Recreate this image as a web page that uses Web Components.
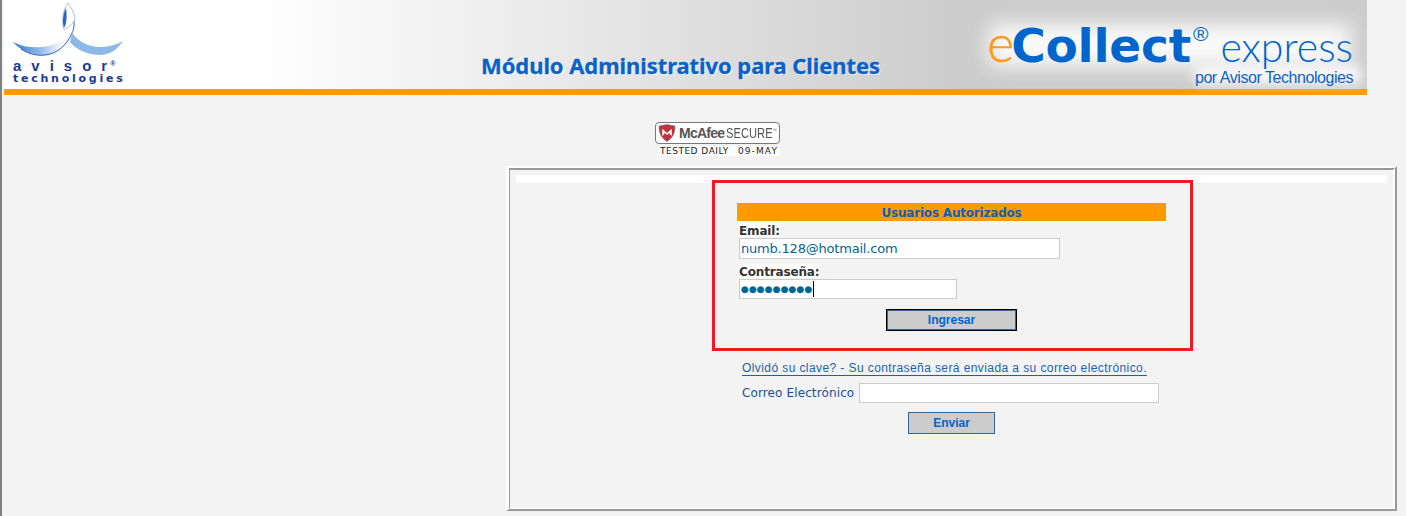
<!DOCTYPE html>
<html>
<head>
<meta charset="utf-8">
<title>eCollect express</title>
<style>
  html, body { margin: 0; height: 100%; overflow: hidden; }
  body { background: #f3f3f3; font-family: "Liberation Sans", Arial, sans-serif; }
  page-frame { height: 516px; }
</style>
</head>
<body>
<page-frame>
  <top-banner></top-banner>
  <secure-badge></secure-badge>
  <login-panel></login-panel>
</page-frame>

<script>
class PageFrame extends HTMLElement {
  constructor() {
    super();
    this.attachShadow({ mode: 'open' }).innerHTML = `
      <style>
        :host { display: block; box-sizing: border-box; border-left: 2px solid #808080; padding-left: 2px; background: #f3f3f3; }
      </style>
      <slot></slot>`;
  }
}

class TopBanner extends HTMLElement {
  constructor() {
    super();
    this.attachShadow({ mode: 'open' }).innerHTML = `
      <style>
        :host { display: block; width: 1363px; height: 95px; box-sizing: border-box; border-bottom: 6px solid #ff9900;
                background: linear-gradient(90deg, #fff 0, #fff 250px, #ccc 960px, #ccc 100%); position: relative; }
        .row { display: flex; align-items: flex-start; height: 89px; }
        .avisor { width: 477px; flex: none; padding: 3px 0 0 9px; box-sizing: border-box; }
        .avisor svg { display: block; }
        .word { font: bold 15px/15px "Liberation Sans", sans-serif; color: #1b3a94; letter-spacing: 10px; margin: -1px 0 0 0; white-space: nowrap; }
        .word span { letter-spacing: 3px; }
        .word sup { font-size: 7px; letter-spacing: 0; vertical-align: 5px; line-height: 0; }
        .tech { font: bold 11px/11px "DejaVu Sans", sans-serif; color: #1b3a94; letter-spacing: 2.75px; white-space: nowrap; }
        h1 { margin: 51px 0 0; font: bold 22px/28px "Noto Sans", sans-serif; color: #0a62c8; white-space: nowrap; width: 400px; flex: none;
             letter-spacing: -.08px; -webkit-text-stroke: .3px #0a62c8; text-shadow: 1px 1px 0 #fff; }
        .brand { position: relative; margin-left: 102px; width: 380px; flex: none; }
        .brand::before { content: ""; position: absolute; left: 6px; top: 24px; width: 362px; height: 42px; background: #fff; opacity: .9; filter: blur(10px); }
        .brand::after { content: ""; position: absolute; left: 212px; top: 66px; width: 166px; height: 18px; background: #fff; opacity: .9; filter: blur(6px); }
        .logo { position: absolute; left: 4px; top: 12px; white-space: nowrap; z-index: 1; line-height: 60px; color: #0066cc; }
        .e { font: 300 52px/60px Lato, sans-serif; color: #ff9a1c; margin-right: -3px; -webkit-text-stroke: .6px #ff9a1c; }
        .c { font: bold 47px/60px "DejaVu Sans", sans-serif; letter-spacing: -.2px; }
        .r { font: 300 21px/20px "Liberation Sans", sans-serif; vertical-align: 21px; margin-left: 2px; }
        .x { font: 300 41px/60px Lato, sans-serif; margin-left: 12px; }
        .por { position: absolute; right: 10px; top: 68px; z-index: 1; font: 16px/20px "Liberation Sans", sans-serif; color: #0a62c8; letter-spacing: -.45px; white-space: nowrap; }
      </style>
      <div class="row">
        <div class="avisor">
          <svg width="112" height="56" viewBox="0 0 112 56">
            <defs>
              <linearGradient id="lg" x1="0" x2="1" y1="0" y2="0">
                <stop offset="0" stop-color="#2f78d0"/><stop offset=".45" stop-color="#8db8e8"/><stop offset=".8" stop-color="#f5f9fd"/>
              </linearGradient>
            </defs>
            <path d="M0 39 C10 44 20 45 29 44 C40 43 50 38 59 30 C56 42 44 52 30 52 C18 52 7 47 0 39 Z" fill="url(#lg)"/>
            <path d="M8 46 C16 51 24 53 32 52 C44 51 54 42 59 30 C61 26 62 20 60 14" fill="none" stroke="#1f4fa8" stroke-width=".9"/>
            <path d="M59 30 C66 39 76 44 87 44 C95 44 103 42 110 38 C104 47 96 52 87 52 C75 52 62 46 57 39 Z" fill="#8db9e6"/>
            <path d="M55 0 C50 7 48 17 51 27 C56 24 61 20 62 15 C61 9 58 4 55 0 Z" fill="#fff" stroke="#8fb6e4" stroke-width=".8"/>
            <path d="M53 5 C50 11 49 18 51 25 C54 20 54 13 53 5 Z" fill="#2a65bf"/>
          </svg>
          <div class="word">aviso<span>r</span><sup>®</sup></div>
          <div class="tech">technologies</div>
        </div>
        <h1>Módulo Administrativo para Clientes</h1>
        <div class="brand">
          <div class="logo"><span class="e">e</span><span class="c">Collect</span><span class="r">®</span><span class="x">express</span></div>
          <div class="por">por Avisor Technologies</div>
        </div>
      </div>`;
  }
}

class SecureBadge extends HTMLElement {
  constructor() {
    super();
    this.attachShadow({ mode: 'open' }).innerHTML = `
      <style>
        :host { display: block; box-sizing: border-box; width: 125px; margin: 27px 0 10px 651px; }
        .top { box-sizing: border-box; height: 22px; background: #fff; border: 1px solid #777; border-radius: 4px; display: flex; align-items: center; padding-left: 2px; gap: 3px; white-space: nowrap; }
        .top svg { flex: none; }
        .top div { min-width: 0; }
        .top b { font: bold 14px/20px "Liberation Sans", sans-serif; color: #555; letter-spacing: -.75px; }
        .top span { display: inline-block; font: 14px/20px "Liberation Sans", sans-serif; color: #555; transform: scaleX(.8); transform-origin: 0 50%; margin: 0 -14px 0 2px; }
        .top sup { font-size: 5px; line-height: 0; vertical-align: 6px; }
        .bottom { margin: 2px 0 0 4px; background: #fff; height: 10px; padding: 0 2px 0 1px; display: flex; justify-content: space-between; font: 9px/10px "DejaVu Sans", sans-serif; color: #222; white-space: nowrap; letter-spacing: .5px; }
        .bottom span + span { letter-spacing: 1.1px; }
      </style>
      <div class="top">
        <svg width="18" height="18" viewBox="0 0 17 17">
          <path d="M1 2 L8.5 0.5 L16 2 C16.5 9 13 14 8.5 16.5 C4 14 .5 9 1 2 Z" fill="#c0323c" stroke="#777" stroke-width=".6"/>
          <path d="M4 11 V4.5 L8.5 8.5 L13 4.5 V11 L11 9.8 V8 L8.5 10.5 L6 8 V9.8 Z" fill="#fff"/>
        </svg>
        <div><b>McAfee</b><span>SECURE<sup>™</sup></span></div>
      </div>
      <div class="bottom"><span>TESTED DAILY</span><span>09-MAY</span></div>`;
  }
}

class TextField extends HTMLElement {
  constructor() {
    super();
    const value = this.getAttribute('value') || '';
    const dots = this.hasAttribute('password');
    const caret = this.hasAttribute('caret') ? '<i></i>' : '';
    this.attachShadow({ mode: 'open' }).innerHTML = `
      <style>
        :host { display: block; box-sizing: border-box; background: #fff; border: 1px solid #ccc; height: var(--h, 21px); width: var(--w, 300px); padding-left: 1px; }
        div { font: 13px/19px "DejaVu Sans", sans-serif; color: #006699; letter-spacing: -.2px; white-space: nowrap; display: flex; align-items: center; height: 100%; }
        .dots { font-size: 9.1px; letter-spacing: 0; }
        i { display: block; width: 1px; height: 16px; background: #000; margin-left: 1px; }
      </style>
      <div class="${dots ? 'dots' : ''}">${value}${caret}</div>`;
  }
}

class BlueButton extends HTMLElement {
  constructor() {
    super();
    this.attachShadow({ mode: 'open' }).innerHTML = `
      <style>
        :host { display: block; box-sizing: border-box; background: #ccc; border: 1px solid #336699; color: #0066cc;
                font: bold 12px/20px "Liberation Sans", sans-serif; text-align: center; }
        :host([focused]) { outline: 1px solid #000; outline-offset: 0; line-height: 19px; }
      </style>
      <slot></slot>`;
  }
}

class LoginBox extends HTMLElement {
  constructor() {
    super();
    this.attachShadow({ mode: 'open' }).innerHTML = `
      <style>
        :host { display: block; box-sizing: border-box; width: 481px; height: 171px; border: 3px solid #ed1c24; padding: 20px 0 0 22px; }
        .title { width: 429px; height: 18px; background: #ff9900; color: #0a5fc0; font: bold 12px/20px "DejaVu Sans", sans-serif; letter-spacing: -.2px; text-align: center; }
        .fields { padding-left: 2px; }
        label { display: table; background: #fff; color: #333; font: bold 12px/12px "DejaVu Sans", sans-serif; letter-spacing: -.15px; padding-top: 2px; }
        .email { margin-top: 2px; margin-bottom: 1px; }
        .pass { margin-top: 5px; margin-bottom: 1px; }
        text-field.a { --w: 321px; }
        text-field.b { --w: 218px; --h: 20px; }
        blue-button { width: 129px; height: 20px; margin: 11px 0 0 148px; }
      </style>
      <div class="title">Usuarios Autorizados</div>
      <div class="fields">
        <label class="email">Email:</label>
        <text-field class="a" value="numb.128@hotmail.com"></text-field>
        <label class="pass">Contraseña:</label>
        <text-field class="b" password caret value="●●●●●●●●●"></text-field>
        <blue-button focused>Ingresar</blue-button>
      </div>`;
  }
}

class ForgotForm extends HTMLElement {
  constructor() {
    super();
    this.attachShadow({ mode: 'open' }).innerHTML = `
      <style>
        :host { display: block; margin-top: 9px; padding-left: 742px; }
        a { display: block; font: 12px/17px "Liberation Sans", sans-serif; color: #1f5fa8; text-decoration: underline; text-underline-offset: 3px; letter-spacing: .41px; white-space: nowrap; }
        .row { display: flex; align-items: center; gap: 5px; margin-top: 6px; }
        span { font: 12px/20px "DejaVu Sans", sans-serif; color: #1a4f9c; width: 112px; letter-spacing: .12px; white-space: nowrap; }
        text-field { --w: 300px; --h: 20px; }
        blue-button { width: 87px; height: 22px; margin: 9px 0 0 166px; }
      </style>
      <a href="#">Olvidó su clave? - Su contraseña será enviada a su correo electrónico.</a>
      <div class="row"><span>Correo Electrónico</span><text-field></text-field></div>
      <blue-button>Enviar</blue-button>`;
  }
}

class LoginPanel extends HTMLElement {
  constructor() {
    super();
    this.attachShadow({ mode: 'open' }).innerHTML = `
      <style>
        :host { display: block; box-sizing: border-box; width: 891px; height: 345px; margin-left: 502px; border: 2px solid; border-color: #fff #999 #999 #fff; border-left-width: 3px; }
        .inner { box-sizing: border-box; height: 100%; border: 2px solid; border-color: #999 #fff #fff #999; border-bottom-width: 1px; border-left-width: 1px; padding-top: 5px; }
        .strip { height: 8px; margin: 0 6px 0 6px; background: #fff; }
        login-box { margin: -3px 0 0 202px; }
        forgot-form { margin-left: -510px; }
      </style>
      <div class="inner">
        <div class="strip"></div>
        <login-box></login-box>
        <forgot-form></forgot-form>
      </div>`;
  }
}

customElements.define('page-frame', PageFrame);
customElements.define('top-banner', TopBanner);
customElements.define('secure-badge', SecureBadge);
customElements.define('text-field', TextField);
customElements.define('blue-button', BlueButton);
customElements.define('login-box', LoginBox);
customElements.define('forgot-form', ForgotForm);
customElements.define('login-panel', LoginPanel);
</script>
</body>
</html>
